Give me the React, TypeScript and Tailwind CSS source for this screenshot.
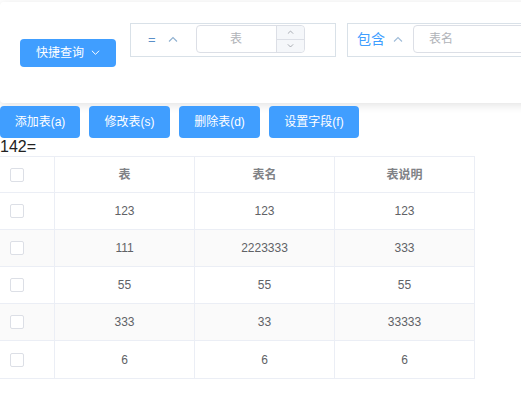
import React from "react";

const rows = [
  ["123", "123", "123"],
  ["111", "2223333", "333"],
  ["55", "55", "55"],
  ["333", "33", "33333"],
  ["6", "6", "6"],
];

const font = { fontFamily: '"Liberation Sans", Arial, "Noto Sans CJK SC", sans-serif' };

function Chevron({ up, className }: { up?: boolean; className?: string }) {
  return (
    <svg viewBox="0 0 10 6" className={className} fill="none" stroke="currentColor" strokeWidth="1.1">
      {up ? <path d="M1 5.5 L5 1.5 L9 5.5" /> : <path d="M1 0.5 L5 4.5 L9 0.5" />}
    </svg>
  );
}

function Checkbox() {
  return <div className="w-[14px] h-[14px] border border-[#dcdfe6] rounded-[2px] bg-white" />;
}

export default function App() {
  return (
    <div
      className="w-[521px] h-[397px] bg-white overflow-hidden font-['Liberation_Sans','Noto_Sans_CJK_SC',sans-serif]"
      style={font}
    >
      <div className="pt-[2px]">
        <div className="w-[600px] h-[101px] bg-white rounded-[4px] shadow-[0_2px_10px_rgba(0,0,0,0.12)] flex items-start">
          <button className="ml-[20px] mt-[37px] w-[96px] h-[28px] bg-[#409eff] rounded-[4px] text-white text-[12px] flex items-center justify-center gap-[7px]">
            <span>快捷查询</span>
            <Chevron className="w-[9px] h-[6px]" />
          </button>
          <div className="ml-[14px] mt-[21px] w-[206px] h-[34px] border border-[#d9e1e8] flex items-start">
            <div className="h-[30px] flex items-center">
              <span className="ml-[17px] text-[#5a8fc8] text-[13px] leading-none">=</span>
              <Chevron up className="ml-[12px] w-[10px] h-[6px] text-[#8fb0d0]" />
            </div>
            <div className="ml-[18px] mt-[1px] w-[109px] h-[28px] border border-[#dcdfe6] rounded-[4px] flex bg-white">
              <div className="flex-1 flex items-center justify-center text-[12px] text-[#b0b3b8]">表</div>
              <div className="w-[28px] border-l border-[#dcdfe6] bg-[#f5f7fa] rounded-r-[4px] flex flex-col">
                <div className="flex-1 flex items-center justify-center border-b border-[#dcdfe6]">
                  <Chevron up className="w-[7px] h-[4px] text-[#909399]" />
                </div>
                <div className="flex-1 flex items-center justify-center">
                  <Chevron className="w-[7px] h-[4px] text-[#909399]" />
                </div>
              </div>
            </div>
          </div>
          <div className="ml-[11px] mt-[21px] w-[206px] h-[34px] border border-[#d9e1e8] flex items-start">
            <div className="h-[30px] flex items-center">
              <span className="ml-[9px] text-[#409eff] text-[14px] leading-none">包含</span>
              <Chevron up className="ml-[8px] w-[10px] h-[6px] text-[#9fbcd8]" />
            </div>
            <div className="ml-[10px] mt-[1px] w-[130px] h-[28px] border border-[#dcdfe6] rounded-[4px] flex items-center bg-white">
              <span className="ml-[15px] text-[12px] text-[#b0b3b8]">表名</span>
            </div>
          </div>
        </div>
      </div>
      <div className="mt-[3px] flex gap-[9px] h-[32px]">
        {[
          ["添加表(a)", "w-[80px]"],
          ["修改表(s)", "w-[81px]"],
          ["删除表(d)", "w-[81px]"],
          ["设置字段(f)", "w-[90px]"],
        ].map(([t, w]) => (
          <button key={t} className={`${w} h-[32px] bg-[#409eff] rounded-[4px] text-white text-[12px] flex items-center justify-center`}>
            {t}
          </button>
        ))}
      </div>
      <div className="h-[18px] text-[16px] leading-[18px] text-[#222]">142=</div>
      <div className="w-[475px] border-b border-[#ebeef5]">
        <div className="flex h-[37px] border-t border-b border-[#ebeef5] text-[12px] font-bold text-[#808286] bg-white">
          <div className="w-[55px] border-r border-[#ebeef5] flex items-center pl-[10px]"><Checkbox /></div>
          <div className="w-[140px] border-r border-[#ebeef5] flex items-center justify-center">表</div>
          <div className="w-[140px] border-r border-[#ebeef5] flex items-center justify-center">表名</div>
          <div className="w-[140px] border-r border-[#ebeef5] flex items-center justify-center">表说明</div>
        </div>
        {rows.map((r, i) => (
          <div
            key={i}
            className={`flex h-[37px] text-[12px] text-[#606266] ${i < rows.length - 1 ? "border-b border-[#ebeef5]" : ""} ${i % 2 === 1 ? "bg-[#fafafa]" : "bg-white"}`}
          >
            <div className="w-[55px] border-r border-[#ebeef5] flex items-center pl-[10px]"><Checkbox /></div>
            {r.map((c, j) => (
              <div key={j} className="w-[140px] border-r border-[#ebeef5] flex items-center justify-center">{c}</div>
            ))}
          </div>
        ))}
      </div>
    </div>
  );
}
